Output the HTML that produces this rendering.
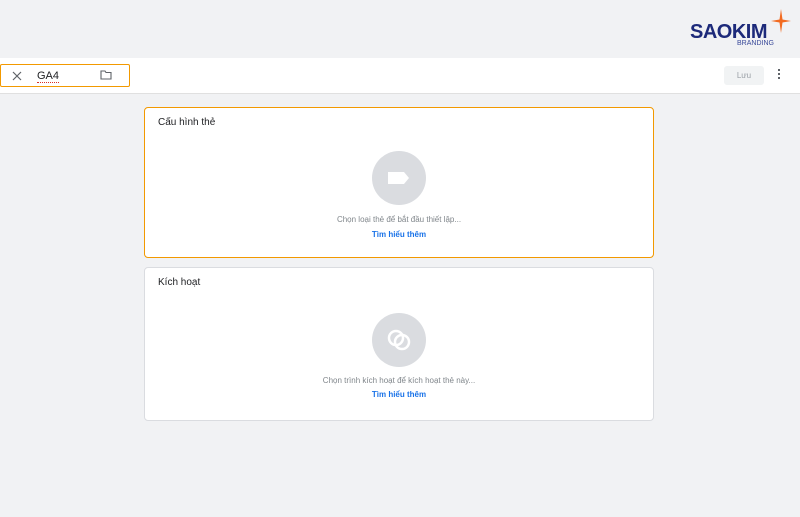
<!DOCTYPE html>
<html><head><meta charset="utf-8"><style>
body{margin:0;width:800px;height:517px;background:#f1f2f4;font-family:"Liberation Sans",sans-serif;position:relative;overflow:hidden}
.abs{position:absolute}
.card{position:absolute;left:144px;width:508px;background:#fff;border:1px solid #dadce0;border-radius:4px}
.title{position:absolute;left:13px;top:9px;font-size:10px;color:#202124}
.circ{position:absolute;left:227px;width:54px;height:54px;border-radius:50%;background:#dadce0}
.t1{position:absolute;left:0;width:100%;text-align:center;font-size:8px;color:#80868b}
.t2{position:absolute;left:0;width:100%;text-align:center;font-size:8px;color:#1a73e8;font-weight:bold}
</style></head><body>
<div class="abs" style="left:690px;top:21px;font-size:20px;font-weight:bold;color:#1d2a7a;letter-spacing:-0.5px">SAOKIM</div>
<div class="abs" style="left:737px;top:40px;font-size:7px;color:#3a4a9a">BRANDING</div>
<svg class="abs" style="left:771px;top:9px" width="20" height="24" viewBox="0 0 20 24"><path d="M10 0 L11.5 10.5 L20 12 L11.5 13.5 L10 24 L8.5 13.5 L0 12 L8.5 10.5Z" fill="#f26b21"/></svg>
<div class="abs" style="left:0;top:58px;width:800px;height:35px;background:#fff;border-bottom:1px solid #e0e0e0"></div>
<div class="abs" style="left:0;top:64px;width:128px;height:21px;border:1px solid #f29900;border-radius:2px;background:#fff"></div>
<svg class="abs" style="left:12px;top:71px" width="10" height="10"><path d="M1 1L9 9M9 1L1 9" stroke="#5f6368" stroke-width="1.2"/></svg>
<div class="abs" style="left:37px;top:70px;font-size:11px;color:#202124;border-bottom:1px dotted #d93025">GA4</div>
<svg class="abs" style="left:100px;top:70px" width="12" height="10"><path d="M1 1H5L6 2.5H11V9H1Z" fill="none" stroke="#5f6368" stroke-width="1.1"/></svg>
<div class="abs" style="left:724px;top:66px;width:40px;height:19px;background:#f1f3f4;border-radius:3px;font-size:8px;color:#9aa0a6;text-align:center;line-height:19px">Lưu</div>
<div class="abs" style="left:778px;top:69px;width:3px;font-size:0">
<div style="width:2px;height:2px;background:#5f6368;margin-bottom:2px"></div><div style="width:2px;height:2px;background:#5f6368;margin-bottom:2px"></div><div style="width:2px;height:2px;background:#5f6368"></div></div>
<div class="card" style="top:107px;height:149px;border-color:#f29900">
<div class="title">Cấu hình thẻ</div>
<div class="circ" style="top:43px"><svg width="54" height="54"><path d="M16 21H32L37 27L32 33H16Z" fill="#fff"/></svg></div>
<div class="t1" style="top:107px">Chọn loại thẻ để bắt đầu thiết lập...</div>
<div class="t2" style="top:122px">Tìm hiểu thêm</div>
</div>
<div class="card" style="top:267px;height:152px">
<div class="title">Kích hoạt</div>
<div class="circ" style="top:45px"><svg width="54" height="54"><circle cx="24" cy="25" r="7" fill="none" stroke="#fff" stroke-width="2.5"/><circle cx="30" cy="29" r="7" fill="none" stroke="#fff" stroke-width="2.5"/></svg></div>
<div class="t1" style="top:108px">Chọn trình kích hoạt để kích hoạt thẻ này...</div>
<div class="t2" style="top:122px">Tìm hiểu thêm</div>
</div>
</body></html>
